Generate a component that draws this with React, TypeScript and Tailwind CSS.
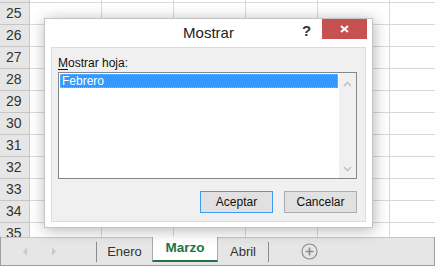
import React from 'react';

const rows = [25, 26, 27, 28, 29, 30, 31, 32, 33, 34, 35];
const cols = [0, 1, 2, 3, 4];

function GridRow({ label, filler }: { label?: number; filler?: boolean }) {
  return (
    <div className={`flex shrink-0 ${filler ? 'h-[3px]' : 'h-[22px]'}`}>
      <div className="w-[30px] shrink-0 bg-[#e6e6e6] border-r border-b border-r-[#c8c8c8] border-b-[#c6c6c6] pl-[6px] text-[14px] leading-[21px] text-[#333]">
        {label}
      </div>
      {cols.map((c) => (
        <div key={c} className="w-[72px] shrink-0 border-r border-b border-[#d9d9d9]" />
      ))}
      <div className="flex-1 border-b border-[#d9d9d9]" />
    </div>
  );
}

function Dialog() {
  return (
    <div className="absolute left-[44px] top-[18px] w-[329px] h-[210px] bg-white border border-[#c4c4c4] shadow-[1px_2px_14px_rgba(0,0,0,0.3)] flex flex-col">
      {/* title bar */}
      <div className="h-[28px] flex items-start">
        <div className="flex-1 text-center text-[15px] leading-[28px] text-[#222] pl-[70px]">Mostrar</div>
        <div className="w-[10px] text-[15px] font-bold leading-[24px] text-[#333] mr-[10px]">?</div>
        <div className="w-[45px] h-[20px] bg-[#c75050] flex items-center justify-center mr-[5px]">
          <svg width="9" height="8" viewBox="0 0 9 8">
            <path d="M1 1 L8 7 M8 1 L1 7" stroke="white" strokeWidth="2" />
          </svg>
        </div>
      </div>

      {/* body */}
      <div className="mx-[6px] mb-[5px] flex-1 bg-[#f0f0f0] border border-[#dcdcdc] flex flex-col pl-[6px] pr-[8px] pt-[8px]">
        <div className="text-[12px] leading-[15px] text-[#111]">
          <span className="underline underline-offset-2">M</span>ostrar hoja:
        </div>
        <div className="mt-[1px] h-[107px] bg-white border border-[#828790] flex">
          <div className="flex-1 p-[1px]">
            <div className="h-[14px] bg-[#3399ff] outline-1 outline-dotted outline-[#e5a24a] -outline-offset-1 text-white text-[12px] leading-[14px] pl-[2px]">
              Febrero
            </div>
          </div>
          <div className="w-[17px] bg-[#f0f0f0] flex flex-col items-center justify-between pt-[8px] pb-[6px]">
            <svg width="9" height="6" viewBox="0 0 9 6">
              <path d="M1 5 L4.5 1.5 L8 5" stroke="#c2c2c2" strokeWidth="1.6" fill="none" />
            </svg>
            <svg width="9" height="6" viewBox="0 0 9 6">
              <path d="M1 1 L4.5 4.5 L8 1" stroke="#c2c2c2" strokeWidth="1.6" fill="none" />
            </svg>
          </div>
        </div>
        <div className="mt-[12px] flex justify-end gap-[11px]">
          <button className="w-[73px] h-[22px] bg-[#e1e1e1] border border-[#3d9bf2] text-[12px] text-[#111]">
            Aceptar
          </button>
          <button className="w-[73px] h-[22px] bg-[#e1e1e1] border border-[#adadad] text-[12px] text-[#111]">
            Cancelar
          </button>
        </div>
      </div>
    </div>
  );
}

function TabBar() {
  return (
    <div className="h-[29px] flex bg-[#e6e6e6] border-l border-r border-b border-[#9e9e9e] text-[13px] text-[#333]">
      <div className="w-[95px] border-t border-[#c6c6c6] flex items-center pl-[21px] gap-[23px]">
        <svg width="6" height="9" viewBox="0 0 6 9">
          <path d="M5 0.5 L1 4.5 L5 8.5 Z" fill="#c8c8c8" />
        </svg>
        <svg width="6" height="9" viewBox="0 0 6 9">
          <path d="M1 0.5 L5 4.5 L1 8.5 Z" fill="#c8c8c8" />
        </svg>
      </div>
      <div className="border-t border-[#c6c6c6] flex items-center">
        <div className="w-px h-[20px] bg-[#8c8c8c]" />
      </div>
      <div className="w-[55px] border-t border-[#c6c6c6] flex items-center justify-center">Enero</div>
      <div className="w-[66px] h-[25px] bg-white border-l border-r border-[#ababab] border-b-2 border-b-[#217346] flex items-center justify-center font-bold text-[#217346] text-[13.5px]">
        Marzo
      </div>
      <div className="w-[50px] border-t border-[#c6c6c6] flex items-center justify-center">Abril</div>
      <div className="border-t border-[#c6c6c6] flex items-center">
        <div className="w-px h-[20px] bg-[#8c8c8c]" />
      </div>
      <div className="flex-1 border-t border-[#c6c6c6] flex items-center pl-[32px]">
        <svg width="17" height="17" viewBox="0 0 17 17">
          <circle cx="8.5" cy="8.5" r="7.5" stroke="#8a8a8a" strokeWidth="1.1" fill="none" />
          <path d="M8.5 4.5 V12.5 M4.5 8.5 H12.5" stroke="#8a8a8a" strokeWidth="1.6" />
        </svg>
      </div>
    </div>
  );
}

export default function App() {
  return (
    <div
      className="relative w-[435px] h-[268px] overflow-hidden bg-white"
      style={{ fontFamily: '"Liberation Sans", Arial, sans-serif' }}
    >
      <div className="h-[237px] overflow-hidden flex flex-col">
        <GridRow filler />
        {rows.map((r) => (
          <GridRow key={r} label={r} />
        ))}
      </div>
      <TabBar />
      <Dialog />
    </div>
  );
}
